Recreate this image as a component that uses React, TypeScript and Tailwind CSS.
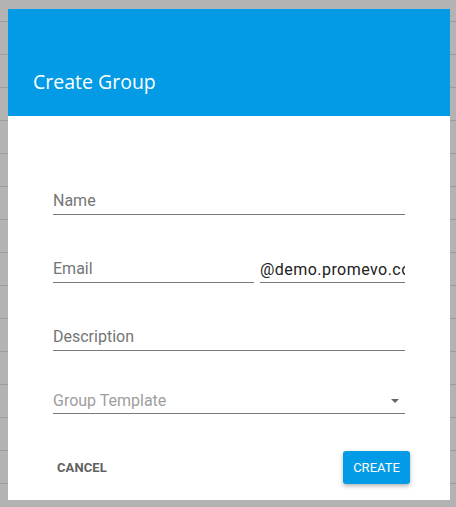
import React from "react";

export default function App() {
  return (
    <div className="w-[456px] h-[507px] overflow-hidden pt-[9px] pl-[8px] bg-[#b3b3b3] bg-[image:repeating-linear-gradient(to_bottom,#b3b3b3_0px,#b3b3b3_21px,#9c9c9c_21px,#9c9c9c_22px,#b3b3b3_22px,#b3b3b3_33px)]">
      <div className="w-[442px] h-[491px] bg-white flex flex-col font-['Roboto',sans-serif]">
        <div className="h-[107px] bg-[#039be5] flex items-end pl-[25px] pb-[20px]">
          <h1 className="text-white text-[19.5px] leading-[28px] font-['Open_Sans',sans-serif] font-normal">
            Create Group
          </h1>
        </div>

        <div className="px-[45px] flex flex-col">
          <div className="mt-[74px] h-[25px] border-b border-[#7a7a7a] pt-[1px] text-[16px] leading-[20px] text-[#757575]">
            Name
          </div>

          <div className="mt-[43px] flex gap-[6px]">
            <div className="w-[201px] h-[25px] border-b border-[#7a7a7a] pt-[1px] text-[16px] leading-[20px] text-[#757575]">
              Email
            </div>
            <div className="flex-1 h-[25px] border-b border-[#7a7a7a] pt-[2px] text-[16px] leading-[20px] text-[#212121] overflow-hidden whitespace-nowrap tracking-[0.45px]">
              @demo.promevo.com
            </div>
          </div>

          <div className="mt-[43px] h-[25px] border-b border-[#7a7a7a] pt-[1px] text-[16px] leading-[20px] text-[#757575]">
            Description
          </div>

          <div className="mt-[38px] h-[25px] border-b border-[#7a7a7a] pt-[2px] flex justify-between items-start">
            <span className="text-[16px] leading-[20px] text-[#9e9e9e]">Group Template</span>
            <svg width="8" height="4" viewBox="0 0 8 4" className="mt-[8px] mr-[6px]">
              <path d="M0 0 L8 0 L4 4 Z" fill="#666" />
            </svg>
          </div>
        </div>

        <div className="mt-[37px] pl-[41px] pr-[40px] flex items-center justify-between">
          <button className="h-[33px] px-[8px] text-[13px] font-bold text-[#616161] uppercase tracking-[0.1px]">
            Cancel
          </button>
          <button className="w-[67px] h-[33px] rounded-[3px] bg-[#039be5] text-white text-[13px] uppercase shadow-[0_2px_4px_rgba(0,0,0,0.3)]">
            Create
          </button>
        </div>
      </div>
    </div>
  );
}
